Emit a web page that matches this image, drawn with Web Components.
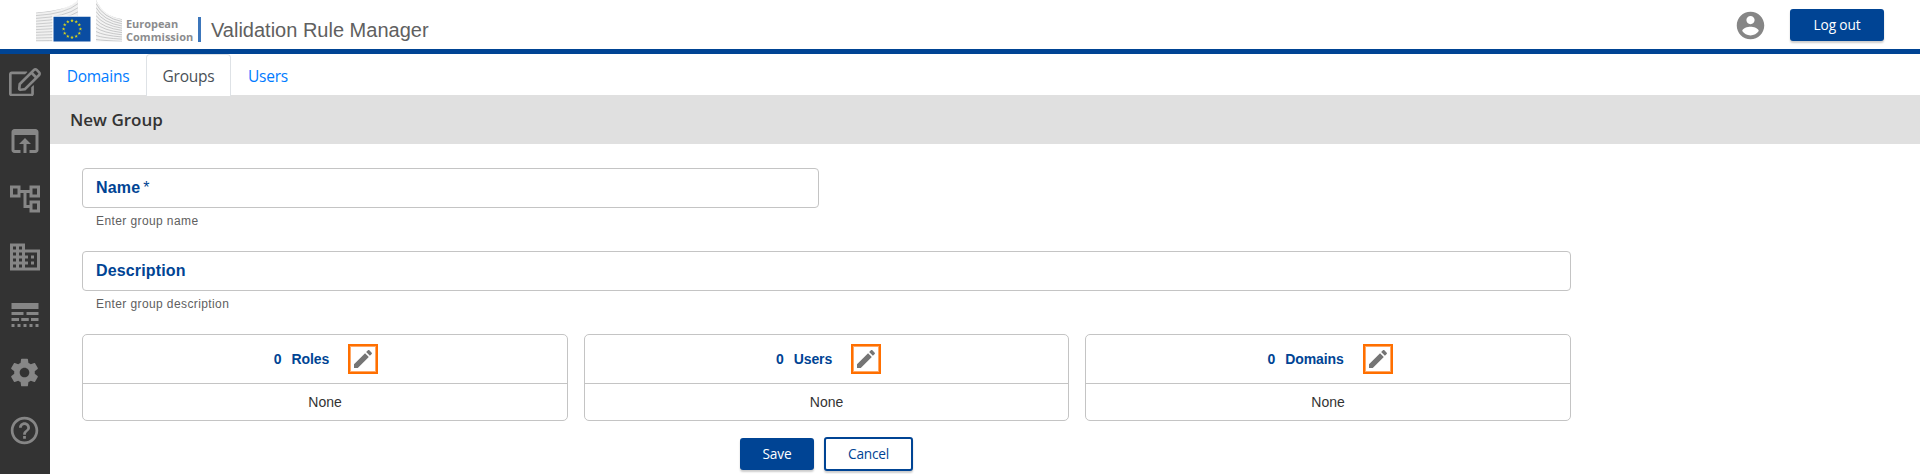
<!DOCTYPE html>
<html lang="en">
<head>
<meta charset="utf-8">
<title>Validation Rule Manager</title>
<style>
html,body{margin:0;height:100%;overflow:hidden;background:#fff}
body{font-family:"Liberation Sans",Arial,sans-serif;color:#333}
</style>
</head>
<body>
<rule-app></rule-app>
<script>
const ICONS = {
  edit: ['0 0 576 512','M402.3 344.9l32-32c5-5 13.7-1.5 13.7 5.7V464c0 26.5-21.5 48-48 48H48c-26.5 0-48-21.5-48-48V112c0-26.5 21.5-48 48-48h273.5c7.1 0 10.7 8.6 5.7 13.7l-32 32c-1.5 1.5-3.5 2.3-5.7 2.3H48v352h352V350.5c0-2.1.8-4.1 2.3-5.6zm156.6-201.8L296.3 405.7l-90.4 10c-26.2 2.9-48.5-19.2-45.6-45.6l10-90.4L432.9 17.1c22.9-22.9 59.9-22.9 82.7 0l43.2 43.2c22.9 22.9 22.9 60 .1 82.8zM460.1 174L402 115.9 216.2 301.8l-7.3 65.3 65.3-7.3L460.1 174zm64.8-79.7l-43.2-43.2c-4.1-4.1-10.8-4.1-14.8 0L436 82l58.1 58.1 30.9-30.9c4-4.2 4-10.8-.1-14.9z'],
  open: ['0 0 24 24','M19 4H5c-1.11 0-2 .9-2 2v12c0 1.1.89 2 2 2h4v-2H5V8h14v10h-4v2h4c1.1 0 2-.9 2-2V6c0-1.1-.89-2-2-2zm-7 6l-4 4h3v6h2v-6h3l-4-4z'],
  tree: ['0 0 24 24','M22 11V3h-7v3H9V3H2v8h7V8h2v10h4v3h7v-8h-7v3h-2V8h2v3h7zM7 9H4V5h3v4zm10 6h3v4h-3v-4zm0-10h3v4h-3V5z'],
  domain: ['0 0 24 24','M12 7V3H2v18h20V7H12zM6 19H4v-2h2v2zm0-4H4v-2h2v2zm0-4H4V9h2v2zm0-4H4V5h2v2zm4 12H8v-2h2v2zm0-4H8v-2h2v2zm0-4H8V9h2v2zm0-4H8V5h2v2zm10 12h-8v-2h2v-2h-2v-2h2v-2h-2V9h8v10zm-2-8h-2v2h2v-2zm0 4h-2v2h2v-2z'],
  lines: ['0 0 24 24','M3 16h5v-2H3v2zm6.5 0h5v-2h-5v2zm6.5 0h5v-2h-5v2zM3 20h2v-2H3v2zm4 0h2v-2H7v2zm4 0h2v-2h-2v2zm4 0h2v-2h-2v2zm4 0h2v-2h-2v2zM3 12h8v-2H3v2zm10 0h8v-2h-8v2zM3 4v4h18V4H3z'],
  settings: ['0 0 24 24','M19.43 12.98c.04-.32.07-.64.07-.98s-.03-.66-.07-.98l2.11-1.65c.19-.15.24-.42.12-.64l-2-3.46c-.12-.22-.39-.3-.61-.22l-2.49 1c-.52-.4-1.08-.73-1.69-.98l-.38-2.65C14.46 2.18 14.25 2 14 2h-4c-.25 0-.46.18-.49.42l-.38 2.65c-.61.25-1.17.59-1.69.98l-2.49-1c-.23-.09-.49 0-.61.22l-2 3.46c-.13.22-.07.49.12.64l2.11 1.65c-.04.32-.07.65-.07.98s.03.66.07.98l-2.11 1.65c-.19.15-.24.42-.12.64l2 3.46c.12.22.39.3.61.22l2.49-1c.52.4 1.08.73 1.69.98l.38 2.65c.03.24.24.42.49.42h4c.25 0 .46-.18.49-.42l.38-2.65c.61-.25 1.17-.59 1.69-.98l2.49 1c.23.09.49 0 .61-.22l2-3.46c.12-.22.07-.49-.12-.64l-2.11-1.65zM12 15.5c-1.93 0-3.5-1.57-3.5-3.5s1.57-3.5 3.5-3.5 3.5 1.57 3.5 3.5-1.57 3.5-3.5 3.5z'],
  help: ['0 0 24 24','M11 18h2v-2h-2v2zm1-16C6.48 2 2 6.48 2 12s4.48 10 10 10 10-4.48 10-10S17.52 2 12 2zm0 18c-4.41 0-8-3.59-8-8s3.59-8 8-8 8 3.59 8 8-3.59 8-8 8zm0-14c-2.21 0-4 1.79-4 4h2c0-1.1.9-2 2-2s2 .9 2 2c0 2-3 1.75-3 5h2c0-2.25 3-2.5 3-5 0-2.21-1.79-4-4-4z'],
  account: ['0 0 24 24','M12 2C6.48 2 2 6.48 2 12s4.48 10 10 10 10-4.48 10-10S17.52 2 12 2zm0 3c1.66 0 3 1.34 3 3s-1.34 3-3 3-3-1.34-3-3 1.34-3 3-3zm0 14.2c-2.5 0-4.71-1.28-6-3.22.03-1.99 4-3.08 6-3.08 1.99 0 5.97 1.09 6 3.08-1.29 1.94-3.5 3.22-6 3.22z'],
  pencil: ['0 0 24 24','M3 17.25V21h3.75L17.81 9.94l-3.75-3.75L3 17.25zM20.71 7.04c.39-.39.39-1.02 0-1.41l-2.34-2.34c-.39-.39-1.02-.39-1.41 0l-1.83 1.83 3.75 3.75 1.83-1.83z']
};
const define = (name, render) => customElements.define(name, class extends HTMLElement {
  constructor() { super(); this.attachShadow({mode: 'open'}); }
  connectedCallback() { this.shadowRoot.innerHTML = render(this); }
});

define('ui-icon', el => {
  const [box, d] = ICONS[el.getAttribute('name')];
  const w = el.getAttribute('w'), h = el.getAttribute('h') || w;
  return `<style>:host{display:block;flex:none;width:${w}px;height:${h}px}svg{display:block}</style>
  <svg width="${w}" height="${h}" viewBox="${box}" fill="currentColor"><path d="${d}"/></svg>`;
});

define('ec-logo', () => {
  let left = '', right = '';
  // fanned stripes of the building on both sides of the flag
  for (let i = 0; i < 11; i++) {
    const y = 12.8 + i * 2.8, t = i / 10;
    left += `<path d="M0 ${y.toFixed(1)}Q30 ${(y - 2 + t * 1.5).toFixed(1)} 42 ${(-.5 + i * 4.1).toFixed(1)}"/>`;
    right += `<path d="M60 ${(-.5 + i * 4).toFixed(1)}Q67 ${(15 + i * 2.55).toFixed(1)} 86 ${(19.4 + i * 2.2).toFixed(1)}"/>`;
  }
  let stars = '';
  for (let i = 0; i < 12; i++) {
    const a = i * Math.PI / 6;
    stars += `<path transform="translate(${(36 + 8.4 * Math.sin(a)).toFixed(2)} ${(29 - 8.4 * Math.cos(a)).toFixed(2)})" d="M0-1.8L.5-.55 1.8-.5.75.25 1.15 1.55 0 .8-1.15 1.55-.75.25-1.8-.5-.5-.55z"/>`;
  }
  return `<style>
    :host{display:flex;flex:none;height:49px;width:165px}
    svg{flex:none;display:block}
    .name{margin:18px 0 0 4px;width:72px;font:700 11px/12.5px "Open Sans","Noto Sans",sans-serif;color:#8b8c8e;white-space:nowrap}
    .name span{display:block}
    .bar{width:2.5px;height:25px;margin-top:17px;background:#3c76bb;flex:none}
  </style>
  <svg width="86" height="49" viewBox="0 0 86 49">
    <defs><clipPath id="l"><path d="M0 12.5Q34 10 42 0V41.5H0z"/></clipPath><clipPath id="r"><path d="M60 0Q68 17 86 19V41.5H60z"/></clipPath></defs>
    <g clip-path="url(#l)"><path fill="#f0f0f0" d="M0 0h42v42H0z"/><g fill="none" stroke="#c6c7c8" stroke-width=".9">${left}</g></g>
    <g clip-path="url(#r)"><path fill="#f3f3f3" d="M60 0h26v42H60z"/><g fill="none" stroke="#c2c3c4" stroke-width=".9">${right}</g></g>
    <path fill="#fff" d="M16.3 15.6h39.5v26.2H16.3z"/><path fill="#0a4da2" d="M17.5 16.8h37v24.8h-37z"/>
    <g fill="#d9d41c">${stars}</g>
  </svg>
  <div class="name"><span style="letter-spacing:-.05px">European</span><span style="letter-spacing:.02px">Commission</span></div><div class="bar"></div>`;
});

define('ui-button', () => `<style>
  :host{display:flex;box-sizing:border-box;align-items:center;justify-content:center;height:32px;border-radius:3px;background:#004494;color:#fff;
    font:13.7px/20px "Open Sans","Noto Sans",sans-serif;letter-spacing:-.15px;white-space:nowrap;box-shadow:0 2px 2px rgba(0,0,0,.2);flex:none}
  :host([outline]){background:#fff;color:#004494;border:2px solid #004494;height:34px;letter-spacing:-.25px}
  </style><slot></slot>`);

define('app-header', () => `<style>
  :host{display:flex;box-sizing:border-box;height:54px;border-bottom:5px solid #004494;padding-left:36px;padding-right:36px;background:#fff}
  h1{margin:18px 0 0 10px;font:400 20px/24px "Liberation Sans",Arial,sans-serif;color:#606060;white-space:nowrap}
  .right{margin-left:auto;display:flex;align-items:flex-start;padding-top:9px}
  ui-icon{color:#868686;margin-right:23.5px;margin-top:-.5px}
  ui-button{width:94px}
  </style><ec-logo></ec-logo><h1>Validation Rule Manager</h1>
  <div class="right"><ui-icon name="account" w="33"></ui-icon><ui-button>Log out</ui-button></div>`);

define('side-nav', () => `<style>
  :host{display:flex;flex-direction:column;width:50px;flex:none;background:#333;color:#868686}
  div{height:58px;flex:none;display:flex;align-items:center;justify-content:center}
  .up{padding-bottom:2px;box-sizing:border-box}
  .up.odd{padding:0 1px 1px 0}
  </style>
  <div class="up"><ui-icon name="edit" w="32" h="28.5"></ui-icon></div>
  <div><ui-icon name="open" w="36"></ui-icon></div>
  <div><ui-icon name="tree" w="36"></ui-icon></div>
  <div><ui-icon name="domain" w="36"></ui-icon></div>
  <div><ui-icon name="lines" w="36"></ui-icon></div>
  <div class="up odd"><ui-icon name="settings" w="33"></ui-icon></div>
  <div class="up odd"><ui-icon name="help" w="33"></ui-icon></div>`);

define('tab-item', () => `<style>
  :host{display:flex;box-sizing:border-box;justify-content:center;height:41px;padding-top:9px;color:#007bff;border:1px solid transparent;border-bottom:0;
   border-radius:4px 4px 0 0;font:15.5px/24px "Open Sans","Noto Sans",sans-serif;letter-spacing:-.25px;white-space:nowrap}
  :host([active]){color:#495057;border-color:#dee2e6;background:#fff;height:42px;position:relative;z-index:1}
  </style><slot></slot>`);

define('tab-bar', () => `<style>:host{display:flex;height:41px}
  </style><slot></slot>`);

define('text-field', el => `<style>
  :host{display:block}
  .box{box-sizing:border-box;height:40px;border:1px solid #c4c4c4;border-radius:4px;padding:0 13px;display:flex;align-items:center;font:700 16px/18px "Liberation Sans",Arial,sans-serif;letter-spacing:.15px;color:#004494}
  .box b{padding-bottom:1px}
  .box i{font:400 16px/18px "Liberation Sans",Arial,sans-serif;margin-left:3px;padding-bottom:1px}
  .hint{margin:6px 0 0 14px;font:12px/14px "Liberation Sans",Arial,sans-serif;letter-spacing:.4px;color:#606060}
  </style><div class="box"><b>${el.getAttribute('label')}</b>${el.hasAttribute('required') ? '<i>*</i>' : ''}</div><div class="hint"><slot></slot></div>`);

define('count-card', el => `<style>
  :host{display:flex;flex-direction:column;box-sizing:border-box;height:87px;border:1px solid #c4c4c4;border-radius:5px;font:14px/16px "Liberation Sans",Arial,sans-serif;color:#333}
  .head{display:flex;align-items:center;justify-content:center;height:48px;border-bottom:1px solid #c4c4c4;font-weight:700;color:#004494}
  .n{margin:0 10px 0 var(--shift,2px)}
  .label{letter-spacing:-.1px}
  .edit{margin-left:19px;width:30px;height:30px;box-sizing:border-box;border:2px solid #ff6f00;box-shadow:inset 0 0 0 1px #ffa866;color:#757575;display:flex;align-items:center;justify-content:center}
  .body{flex:1;display:flex;align-items:center;justify-content:center}
  </style><div class="head"><span class="n">0</span><span class="label">${el.getAttribute('label')}</span><span class="edit"><ui-icon name="pencil" w="24"></ui-icon></span></div>
  <div class="body"><slot></slot></div>`);

define('page-title', () => `<style>:host{display:flex;align-items:center;box-sizing:border-box;height:49px;padding:1px 0 0 20px;background:#e0e0e0;
  font:600 17px/24px "Open Sans","Noto Sans",sans-serif;color:#333}</style><slot></slot>`);

define('group-form', () => `<style>
  :host{display:block;padding:24px 0 0 32px;width:1489px}
  .name{width:737px;height:83px}
  .desc{height:83px}
  .cards{display:grid;grid-template-columns:486px 485px 486px;gap:16px}
  .actions{display:flex;align-items:center;justify-content:center;gap:10px;margin-top:16px}
  </style>
  <text-field class="name" label="Name" required>Enter group name</text-field>
  <text-field class="desc" label="Description">Enter group description</text-field>
  <div class="cards">
    <count-card label="Roles">None</count-card>
    <count-card label="Users" style="--shift:4px">None</count-card>
    <count-card label="Domains" style="--shift:4px">None</count-card>
  </div>
  <div class="actions"><ui-button style="width:74px">Save</ui-button><ui-button outline style="width:89px">Cancel</ui-button></div>`);

define('rule-app', () => `<style>
  :host{display:flex;flex-direction:column;height:474px;background:#fff}
  .row{display:flex;flex:1;min-height:0;overflow:hidden}
  main{flex:1;min-width:0}
  </style><app-header></app-header>
  <div class="row"><side-nav></side-nav><main>
    <tab-bar><tab-item style="width:96px">Domains</tab-item><tab-item active style="width:85px">Groups</tab-item><tab-item style="width:74px">Users</tab-item></tab-bar>
    <page-title>New Group</page-title>
    <group-form></group-form>
  </main></div>`);
</script>
</body>
</html>
